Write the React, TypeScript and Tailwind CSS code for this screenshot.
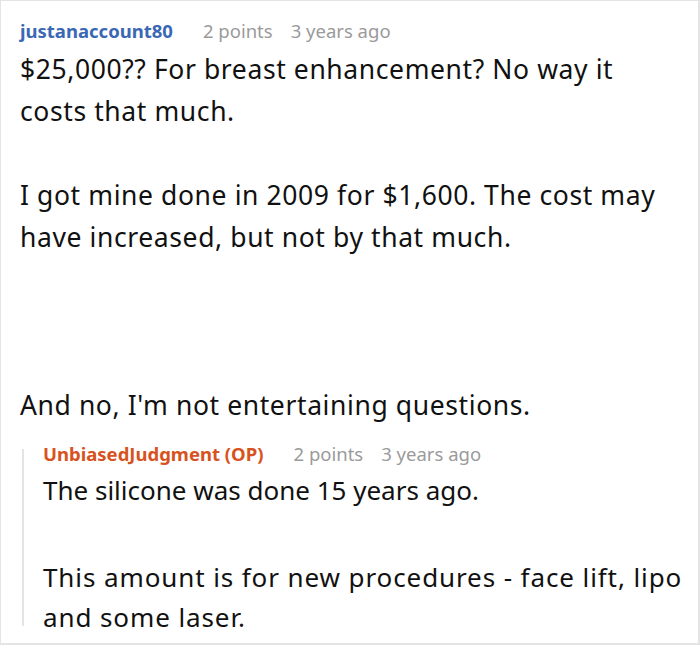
const font = { fontFamily: '"Noto Sans", "Open Sans", sans-serif' };

function Meta({ name, color }: { name: string; color: string }) {
  return (
    <div className="flex items-center text-[18.5px] leading-[24px]">
      <span className={`mr-[30px] font-bold ${color}`}>{name}</span>
      <span className="mr-[18px] text-[#9a9a9a]">2 points</span>
      <span className="text-[#9a9a9a]">3 years ago</span>
    </div>
  );
}

export default function App() {
  return (
    <div style={font} className="h-[646px] w-[700px] overflow-hidden bg-white">
      <div className="h-[645px] w-[700px] overflow-hidden border-t border-l border-r-2 border-b-2 border-[#e4e4e4] pl-[19px] pt-[18px] text-[#111]">
        <Meta name="justanaccount80" color="text-[#3a68b4]" />
        <div className="mt-[5px] w-[650px] text-[26.5px] leading-[42px] tracking-[0.6px]">
          <p>$25,000?? For breast enhancement? No way it costs that much.</p>
          <p className="mt-[42px]">I got mine done in 2009 for $1,600. The cost may have increased, but not by that much.</p>
          <p className="mt-[126px]">And no, I'm not entertaining questions.</p>
        </div>
        <div className="mt-[16px] flex">
          <div className="ml-[2px] mt-[7px] h-[177px] w-[2px] shrink-0 bg-[#e4e4e4]" />
          <div className="ml-[19px]">
            <Meta name="UnbiasedJudgment (OP)" color="text-[#d8521d]" />
            <div className="mt-[3px] w-[650px] text-[26px] leading-[42px]">
              <p>The silicone was done 15 years ago.</p>
              <p className="mt-[46px] leading-[40px] tracking-[0.9px]">This amount is for new procedures - face lift, lipo and some laser.</p>
            </div>
          </div>
        </div>
      </div>
    </div>
  );
}
